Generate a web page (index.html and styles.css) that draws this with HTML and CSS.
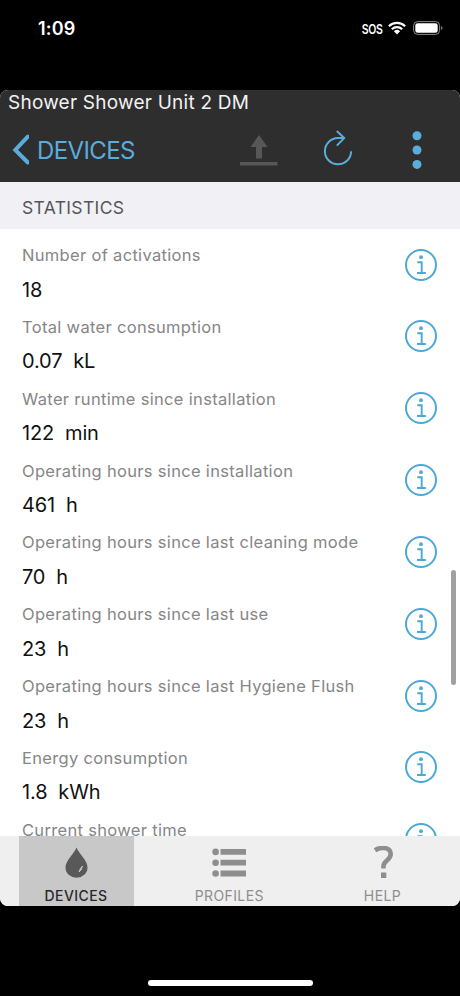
FILE: index.html
```html
<!DOCTYPE html>
<html lang="en">
<head>
<meta charset="utf-8">
<title>Shower Unit Statistics</title>
<link rel="stylesheet" href="styles.css">
</head>
<body>
<svg class="symbols" aria-hidden="true">
  <symbol id="info" viewBox="0 0 32 32">
    <circle cx="16" cy="16" r="15" fill="none" stroke="currentColor" stroke-width="2"/>
    <circle cx="16" cy="8.2" r="1.9" fill="currentColor"/>
    <path d="M12.3 13.3H16.7V24M12 24H20.8" fill="none" stroke="currentColor" stroke-width="1.9"/>
  </symbol>
</svg>
<div class="phone">
  <div class="status">
    <span class="time">1:09</span>
    <div class="signals">
      <span class="sos">SOS</span>
      <svg class="wifi" viewBox="0 0 18 14"><g fill="none" stroke="#fff" stroke-width="2.2"><path d="M.9 5.2A11.6 11.6 0 0 1 17.1 5.2"/><path d="M3.8 8.2A7.5 7.5 0 0 1 14.2 8.2"/></g><path d="M5.9 10.3A4.5 4.5 0 0 1 12.1 10.3L9 13.5Z" fill="#fff"/></svg>
      <svg class="battery" viewBox="0 0 30 14"><rect x=".6" y=".6" width="26" height="12.8" rx="4" fill="none" stroke="#8b8b8b"/><rect x="2.3" y="2.2" width="22.4" height="9.6" rx="2.4" fill="#fff"/><path d="M28.2 5V9Q29.5 8.5 29.5 7T28.2 5Z" fill="#8b8b8b"/></svg>
    </div>
  </div>
  <div class="app">
    <header>
      <div class="title">Shower Shower Unit 2 DM</div>
      <nav class="toolbar">
        <div class="back">
          <svg class="chevron" viewBox="0 0 18 32"><path d="M16.8 2.7L4.3 16L16.8 28.5" fill="none" stroke="currentColor" stroke-width="4" stroke-linecap="round"/></svg>
          <span>DEVICES</span>
        </div>
        <svg class="upload" viewBox="0 0 38 32"><path d="M19 0L27.5 12H22V23.5H16V12H10.5Z M0 27H37.5V30.5H0Z" fill="#575757"/></svg>
        <svg class="refresh" viewBox="0 0 30 36"><path d="M28.1 21.2A13.1 13.1 0 1 1 15 8.1H21.4M13.8 1L21.2 8.1L13.8 15.6" fill="none" stroke="currentColor" stroke-width="2"/></svg>
        <svg class="more" viewBox="0 0 10 38"><g fill="currentColor"><circle cx="5" cy="4.7" r="4.5"/><circle cx="5" cy="19" r="4.5"/><circle cx="5" cy="33.4" r="4.5"/></g></svg>
      </nav>
    </header>
    <h2>STATISTICS</h2>
    <main>
      <div class="row"><div><div class="label">Number of activations</div><div class="value">18</div></div><svg class="info"><use href="#info"/></svg></div>
      <div class="row"><div><div class="label">Total water consumption</div><div class="value">0.07&nbsp; kL</div></div><svg class="info"><use href="#info"/></svg></div>
      <div class="row"><div><div class="label">Water runtime since installation</div><div class="value">122&nbsp; min</div></div><svg class="info"><use href="#info"/></svg></div>
      <div class="row"><div><div class="label">Operating hours since installation</div><div class="value">461&nbsp; h</div></div><svg class="info"><use href="#info"/></svg></div>
      <div class="row"><div><div class="label">Operating hours since last cleaning mode</div><div class="value">70&nbsp; h</div></div><svg class="info"><use href="#info"/></svg></div>
      <div class="row"><div><div class="label">Operating hours since last use</div><div class="value">23&nbsp; h</div></div><svg class="info"><use href="#info"/></svg></div>
      <div class="row"><div><div class="label">Operating hours since last Hygiene Flush</div><div class="value">23&nbsp; h</div></div><svg class="info"><use href="#info"/></svg></div>
      <div class="row"><div><div class="label">Energy consumption</div><div class="value">1.8&nbsp; kWh</div></div><svg class="info"><use href="#info"/></svg></div>
      <div class="row"><div><div class="label">Current shower time</div></div><svg class="info"><use href="#info"/></svg></div>
      <div class="scrollbar"></div>
    </main>
    <footer>
      <div class="tab active">
        <svg viewBox="0 0 34 34"><path d="M17.5 1.5C19.5 7 28.5 14.5 28.5 21.5A11 10.3 0 0 1 6.5 21.5C6.5 14.5 15.5 7 17.5 1.5Z" fill="#595959"/><path d="M20 26Q23 24 23.5 20Q20.5 23 20 26Z" fill="#c8c8c8" stroke="#c8c8c8" stroke-width=".8"/></svg>
        <span>DEVICES</span>
      </div>
      <div class="tab">
        <svg viewBox="0 0 34 34"><g fill="#8e8e8e"><circle cx="3.6" cy="5.9" r="3.3"/><circle cx="3.6" cy="16.7" r="3.3"/><circle cx="3.6" cy="27.5" r="3.3"/><path d="M8.5 3H34V8.8H8.5ZM8.5 13.8H34V19.6H8.5ZM8.5 24.6H34V30.4H8.5Z"/></g></svg>
        <span>PROFILES</span>
      </div>
      <div class="tab">
        <svg viewBox="0 0 34 34"><path d="M9 4.2C14 1 24.7 .4 24.7 8.3C24.7 14.4 17.5 14.5 17.5 20V22.4" fill="none" stroke="#8e8e8e" stroke-width="4.6"/><path d="M15 26.5H20.3V32H15Z" fill="#8e8e8e"/></svg>
        <span>HELP</span>
      </div>
    </footer>
  </div>
  <div class="home"></div>
</div>
</body>
</html>
```

FILE: styles.css
```css
* { box-sizing: border-box; }
body { margin: 0; background: #000; font-family: Inter, sans-serif; }
svg { display: block; flex: none; }
.symbols { position: absolute; width: 0; height: 0; }
.phone { width: 460px; height: 996px; display: flex; flex-direction: column; background: #000; overflow: hidden; }
.status { height: 90px; flex: none; padding: 16px 17px 0 38px; display: flex; align-items: flex-start; justify-content: space-between; color: #fff; }
.time { margin-top: 1px; font-size: 18px; line-height: 24px; font-weight: 600; letter-spacing: .2px; }
.signals { display: flex; align-items: center; height: 25px; }
.sos { font-size: 13px; font-weight: 600; letter-spacing: -.5px; transform: scaleX(.81); transform-origin: right; margin-right: 6px; }
.wifi { width: 18px; height: 14px; margin-right: 7px; margin-top: -1px; }
.battery { width: 30px; height: 14px; margin-top: -1px; }
.app { height: 816px; flex: none; display: flex; flex-direction: column; border-radius: 8px; overflow: hidden; background: #fff; }
header { height: 91.5px; flex: none; background: #2e2e2e; }
.title { height: 26px; padding-left: 8px; color: #f2f2f2; font-size: 19px; line-height: 26px; letter-spacing: .23px; }
.toolbar { height: 65px; display: flex; padding-left: 11px; color: #5aaddb; }
.back { display: flex; width: 229px; height: 68px; align-items: center; font-size: 24px; letter-spacing: -.6px; }
.chevron { width: 18px; height: 32px; margin-right: 8px; }
.upload { width: 38px; height: 32px; margin-top: 19px; }
.refresh { width: 30px; height: 36px; margin: 14px 0 0 45px; }
.more { width: 10px; height: 38px; margin: 15px 0 0 59px; }
h2 { margin: 0; height: 47.5px; flex: none; padding-left: 22px; background: #f0f0f5; color: #555559; font-size: 17.5px; font-weight: 400; line-height: 52px; letter-spacing: .35px; }
main { position: relative; flex: 1; min-height: 0; overflow: hidden; }
.row { height: 71.85px; padding: 14px 23px 0 22px; display: flex; justify-content: space-between; }
.label { height: 24px; line-height: 24px; font-size: 16.5px; color: #868686; white-space: nowrap; letter-spacing: .32px; }
.value { margin-top: 10.5px; height: 24px; line-height: 24px; font-size: 20px; color: #111; white-space: pre; letter-spacing: -.15px; }
.info { width: 32px; height: 32px; margin-top: 5.5px; color: #4ca9d4; }
.scrollbar { position: absolute; right: 4px; top: 341px; width: 5px; height: 115px; border-radius: 3px; background: #a0a0a0; }
footer { height: 70px; flex: none; display: flex; justify-content: space-between; padding: 0 20px 0 18.5px; background: #efefef; }
.tab { width: 115px; padding-top: 10px; display: flex; flex-direction: column; align-items: center; color: #8e8e8e; font-size: 14px; line-height: 21px; letter-spacing: .4px; }
.tab svg { width: 34px; height: 34px; margin-bottom: 5px; }
.active { background: #c8c8c8; color: #292929; font-weight: 500; }
.home { width: 165px; height: 6px; margin: 74px 0 0 148px; border-radius: 3px; background: #fff; }
```
